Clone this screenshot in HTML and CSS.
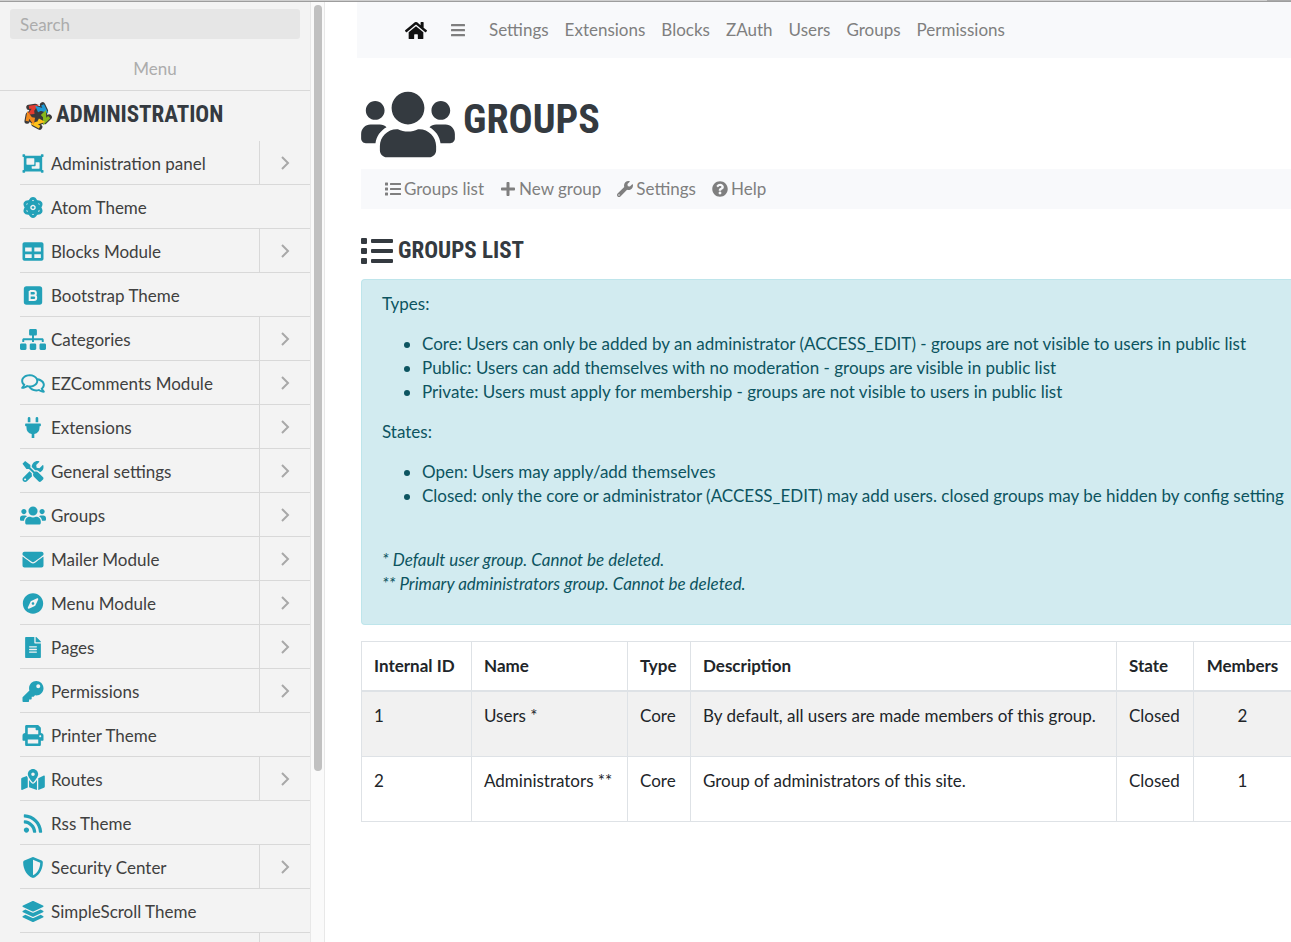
FILE: index.html
```
<!DOCTYPE html>
<html lang="en">
<head>
<meta charset="utf-8">
<title>Groups list</title>
<link rel="stylesheet" href="styles.css">
</head>
<body>
<svg class="sprite" aria-hidden="true">
<symbol id="i-users" viewBox="0 0 640 512"><path d="M96 224c35.3 0 64-28.7 64-64s-28.7-64-64-64-64 28.7-64 64 28.7 64 64 64zm448 0c35.3 0 64-28.7 64-64s-28.7-64-64-64-64 28.7-64 64 28.7 64 64 64zm32 32h-64c-17.6 0-33.5 7.1-45.1 18.6 40.3 22.1 68.9 62 75.1 109.4h66c17.7 0 32-14.3 32-32v-32c0-35.3-28.7-64-64-64zm-256 0c61.9 0 112-50.1 112-112S381.9 32 320 32 208 82.1 208 144s50.1 112 112 112zm76.8 32h-8.3c-20.8 10-43.9 16-68.5 16s-47.6-6-68.5-16h-8.3C179.6 288 128 339.6 128 403.2V432c0 26.5 21.5 48 48 48h288c26.5 0 48-21.5 48-48v-28.8c0-63.6-51.6-115.2-115.2-115.2zm-223.7-13.4C161.5 263.1 145.6 256 128 256H64c-35.3 0-64 28.7-64 64v32c0 17.7 14.3 32 32 32h65.9c6.3-47.4 34.9-87.3 75.2-109.4z"/></symbol>
<symbol id="i-home" viewBox="0 0 576 512"><path d="M280.37 148.26L96 300.11V464a16 16 0 0 0 16 16l112.06-.29a16 16 0 0 0 15.92-16V368a16 16 0 0 1 16-16h64a16 16 0 0 1 16 16v95.64a16 16 0 0 0 16 16.05L464 480a16 16 0 0 0 16-16V300L295.67 148.26a12.19 12.19 0 0 0-15.3 0zM571.6 251.47L488 182.56V44.05a12 12 0 0 0-12-12h-56a12 12 0 0 0-12 12v72.61L318.47 43a48 48 0 0 0-61 0L4.34 251.47a12 12 0 0 0-1.6 16.9l25.5 31A12 12 0 0 0 45.15 301l235.22-193.74a12.19 12.19 0 0 1 15.3 0L530.9 301a12 12 0 0 0 16.9-1.6l25.5-31a12 12 0 0 0-1.7-16.93z"/></symbol>
<symbol id="i-bars" viewBox="0 0 448 512"><rect y="60" width="448" height="72" rx="16"/><rect y="220" width="448" height="72" rx="16"/><rect y="380" width="448" height="72" rx="16"/></symbol>
<symbol id="i-list" viewBox="0 0 512 512"><path d="M80 368H16a16 16 0 0 0-16 16v64a16 16 0 0 0 16 16h64a16 16 0 0 0 16-16v-64a16 16 0 0 0-16-16zm0-320H16A16 16 0 0 0 0 64v64a16 16 0 0 0 16 16h64a16 16 0 0 0 16-16V64a16 16 0 0 0-16-16zm0 160H16a16 16 0 0 0-16 16v64a16 16 0 0 0 16 16h64a16 16 0 0 0 16-16v-64a16 16 0 0 0-16-16zm416 176H176a16 16 0 0 0-16 16v32a16 16 0 0 0 16 16h320a16 16 0 0 0 16-16v-32a16 16 0 0 0-16-16zm0-320H176a16 16 0 0 0-16 16v32a16 16 0 0 0 16 16h320a16 16 0 0 0 16-16V80a16 16 0 0 0-16-16zm0 160H176a16 16 0 0 0-16 16v32a16 16 0 0 0 16 16h320a16 16 0 0 0 16-16v-32a16 16 0 0 0-16-16z"/></symbol>
<symbol id="i-plus" viewBox="0 0 448 512"><path d="M416 208H272V64c0-17.67-14.33-32-32-32h-32c-17.67 0-32 14.33-32 32v144H32c-17.67 0-32 14.33-32 32v32c0 17.67 14.33 32 32 32h144v144c0 17.67 14.33 32 32 32h32c17.67 0 32-14.33 32-32V304h144c17.67 0 32-14.33 32-32v-32c0-17.67-14.33-32-32-32z"/></symbol>
<symbol id="i-wrench" viewBox="0 0 512 512"><path d="M507.73 109.1c-2.24-9.03-13.54-12.09-20.12-5.51l-74.36 74.36-67.88-11.31-11.31-67.88 74.36-74.36c6.62-6.62 3.43-17.9-5.66-20.16-47.38-11.74-99.55.91-136.58 37.93-39.64 39.64-50.55 97.1-34.05 147.2L18.74 402.76c-24.99 24.99-24.99 65.51 0 90.5 24.99 24.99 65.51 24.99 90.5 0l213.21-213.21c50.12 16.71 107.47 5.68 147.37-34.22 37.07-37.07 49.7-89.32 37.91-136.73zM64 472c-13.25 0-24-10.75-24-24 0-13.26 10.75-24 24-24s24 10.74 24 24c0 13.25-10.75 24-24 24z"/></symbol>
<symbol id="i-help" viewBox="0 0 512 512"><path d="M504 256c0 136.997-111.043 248-248 248S8 392.997 8 256C8 119.083 119.043 8 256 8s248 111.083 248 248zM262.655 90c-54.497 0-89.255 22.957-116.549 63.758-3.536 5.286-2.353 12.415 2.715 16.258l34.699 26.31c5.205 3.947 12.621 3.008 16.665-2.122 17.864-22.658 30.113-35.797 57.303-35.797 20.429 0 45.698 13.148 45.698 32.958 0 14.976-12.363 22.667-32.534 33.976C247.128 238.528 216 254.941 216 296v4c0 6.627 5.373 12 12 12h56c6.627 0 12-5.373 12-12v-1.333c0-28.462 83.186-29.647 83.186-106.667 0-58.002-60.165-102-116.531-102zM256 338c-25.365 0-46 20.635-46 46 0 25.364 20.635 46 46 46s46-20.636 46-46c0-25.365-20.635-46-46-46z"/></symbol>
<symbol id="i-panel" viewBox="0 0 512 512"><path d="M480 128V96h20c6.627 0 12-5.373 12-12V44c0-6.627-5.373-12-12-12h-40c-6.627 0-12 5.373-12 12v20H64V44c0-6.627-5.373-12-12-12H12C5.373 32 0 37.373 0 44v40c0 6.627 5.373 12 12 12h20v320H12c-6.627 0-12 5.373-12 12v40c0 6.627 5.373 12 12 12h40c6.627 0 12-5.373 12-12v-20h384v20c0 6.627 5.373 12 12 12h40c6.627 0 12-5.373 12-12v-40c0-6.627-5.373-12-12-12h-20V128zM96 276V140c0-6.627 5.373-12 12-12h168c6.627 0 12 5.373 12 12v136c0 6.627-5.373 12-12 12H108c-6.627 0-12-5.373-12-12zm320 96c0 6.627-5.373 12-12 12H236c-6.627 0-12-5.373-12-12v-52h72c13.255 0 24-10.745 24-24v-72h84c6.627 0 12 5.373 12 12v136z"/></symbol>
<symbol id="i-atom" viewBox="0 0 448 512"><g fill="none" stroke="currentColor" stroke-width="72"><ellipse cx="224" cy="256" rx="102" ry="218"/><ellipse cx="224" cy="256" rx="102" ry="218" transform="rotate(60 224 256)"/><ellipse cx="224" cy="256" rx="102" ry="218" transform="rotate(120 224 256)"/></g><circle cx="224" cy="256" r="32"/></symbol>
<symbol id="i-table" viewBox="0 0 512 512"><path d="M464 32H48C21.49 32 0 53.49 0 80v352c0 26.51 21.49 48 48 48h416c26.51 0 48-21.49 48-48V80c0-26.51-21.49-48-48-48zM224 416H64v-96h160v96zm0-160H64v-96h160v96zm224 160H288v-96h160v96zm0-160H288v-96h160v96z"/></symbol>
<symbol id="i-bootstrap" viewBox="0 0 448 512"><rect y="32" width="448" height="448" rx="64"/><g fill="none" stroke="#f3f3f3" stroke-width="48"><path d="M143 146v220h104a55 55 0 0 0 0-110h-104M143 146h96a55 55 0 0 1 0 110"/></g></symbol>
<symbol id="i-sitemap" viewBox="0 0 640 512"><path d="M128 352H32c-17.67 0-32 14.33-32 32v96c0 17.67 14.33 32 32 32h96c17.67 0 32-14.33 32-32v-96c0-17.67-14.33-32-32-32zm-24-80h192v48h48v-48h192v48h48v-57.59c0-21.17-17.23-38.41-38.41-38.41H344v-64h40c17.67 0 32-14.33 32-32V32c0-17.67-14.33-32-32-32H256c-17.67 0-32 14.33-32 32v96c0 17.67 14.33 32 32 32h40v64H94.41C73.23 224 56 241.23 56 262.41V320h48v-48zm264 80h-96c-17.67 0-32 14.33-32 32v96c0 17.67 14.33 32 32 32h96c17.67 0 32-14.33 32-32v-96c0-17.67-14.33-32-32-32zm240 0h-96c-17.67 0-32 14.33-32 32v96c0 17.67 14.33 32 32 32h96c17.67 0 32-14.33 32-32v-96c0-17.67-14.33-32-32-32z"/></symbol>
<symbol id="i-comments" viewBox="0 0 576 512"><path d="M532 386.2c27.5-27.1 44-61.1 44-98.2 0-80-76.5-146.1-176.2-157.9C368.3 72.5 294.3 32 208 32 93.1 32 0 103.6 0 192c0 37 16.5 71 44 98.2-15.3 30.7-37.3 54.5-37.7 54.9-6.3 6.7-8.1 16.5-4.4 25 3.6 8.5 12 14 21.2 14 53.5 0 96.7-20.2 125.2-38.8 9.2 2.1 18.7 3.7 28.4 4.9C208.1 407.6 281.8 448 368 448c20.8 0 40.8-2.4 59.8-6.8C456.3 459.7 499.4 480 553 480c9.2 0 17.5-5.5 21.2-14 3.6-8.5 1.9-18.3-4.4-25-.4-.3-22.5-24.1-37.8-54.8zm-392.8-92.3L122.1 305c-14.1 9.1-28.5 16.3-43.1 21.4 2.7-4.7 5.4-9.7 8-14.8l15.5-31.1L77.7 256C64.2 242.6 48 220.7 48 192c0-60.7 73.3-112 160-112s160 51.3 160 112-73.3 112-160 112c-16.5 0-33-1.9-49-5.6l-19.8-4.5zM498.3 352l-24.7 24.4 15.5 31.1c2.6 5.1 5.3 10.1 8 14.8-14.6-5.1-29-12.3-43.1-21.4l-17.1-11.1-19.9 4.6c-16 3.7-32.5 5.6-49 5.6-54 0-102.2-20.1-131.3-49.7C338 339.5 416 272.9 416 192c0-3.4-.4-6.7-.7-10C479.7 196.5 528 238.8 528 288c0 28.7-16.2 50.6-29.7 64z"/></symbol>
<symbol id="i-plug" viewBox="0 0 384 512"><path d="M320,32a32,32,0,0,0-64,0v96h64Zm48,128H16A16,16,0,0,0,0,176v32a16,16,0,0,0,16,16H32v32A160.07,160.07,0,0,0,160,412.8V512h64V412.8A160.07,160.07,0,0,0,352,256V224h16a16,16,0,0,0,16-16V176A16,16,0,0,0,368,160ZM128,32a32,32,0,0,0-64,0v96h64Z"/></symbol>
<symbol id="i-tools" viewBox="0 0 512 512"><path d="M501.1 395.7L384 278.6c-23.1-23.1-57.6-27.6-85.4-13.9L192 158.1V96L64 0 0 64l96 128h62.1l106.6 106.6c-13.6 27.8-9.2 62.3 13.9 85.4l117.1 117.1c14.6 14.6 38.2 14.6 52.7 0l52.7-52.7c14.5-14.6 14.5-38.2 0-52.7zM331.7 225c28.3 0 54.9 11 74.9 31l19.4 19.4c15.8-6.9 30.8-16.5 43.8-29.5 37.1-37.1 49.7-89.3 37.9-136.7-2.2-9-13.5-12.1-20.1-5.5l-74.4 74.4-67.9-11.3L334 98.9l74.4-74.4c6.6-6.6 3.4-17.9-5.7-20.2-47.4-11.7-99.6.9-136.6 37.9-28.5 28.5-41.9 66.1-41.2 103.6l82.1 82.1c8.1-1.9 16.5-2.9 24.7-2.9zm-103.9 82l-56.7-56.7L18.7 402.8c-25 25-25 65.5 0 90.5s65.5 25 90.5 0l123.6-123.6c-7.6-19.9-9.9-41.6-5-62.7zM64 472c-13.2 0-24-10.8-24-24 0-13.3 10.7-24 24-24s24 10.7 24 24c0 13.2-10.7 24-24 24z"/></symbol>
<symbol id="i-envelope" viewBox="0 0 512 512"><path d="M502.3 190.8c3.9-3.1 9.7-.2 9.7 4.7V400c0 26.5-21.5 48-48 48H48c-26.5 0-48-21.5-48-48V195.6c0-5 5.7-7.8 9.7-4.7 22.4 17.4 52.1 39.5 154.1 113.6 21.1 15.4 56.7 47.8 92.2 47.6 35.7.3 72-32.8 92.3-47.6 102-74.1 131.6-96.3 154-113.7zM256 320c23.2.4 56.6-29.2 73.4-41.4 132.7-96.3 142.8-104.7 173.4-128.7 5.8-4.5 9.2-11.5 9.2-18.9v-19c0-26.5-21.5-48-48-48H48c-26.5 0-48 21.5-48 48v19c0 7.4 3.4 14.3 9.2 18.9 30.6 23.9 40.7 32.4 173.4 128.7 16.8 12.2 50.2 41.8 73.4 41.4z"/></symbol>
<symbol id="i-compass" viewBox="0 0 496 512"><path d="M225.38 233.37c-12.5 12.5-12.5 32.76 0 45.25 12.49 12.5 32.76 12.5 45.25 0 12.5-12.5 12.5-32.76 0-45.25-12.5-12.49-32.76-12.49-45.25 0zM248 8C111.03 8 0 119.03 0 256s111.03 248 248 248 248-111.03 248-248S384.97 8 248 8zm126.14 148.05L308.17 300.4a31.938 31.938 0 0 1-15.77 15.77l-144.34 65.97c-16.65 7.61-33.81-9.55-26.2-26.2l65.98-144.35a31.938 31.938 0 0 1 15.77-15.77l144.34-65.97c16.65-7.6 33.8 9.55 26.19 26.2z"/></symbol>
<symbol id="i-file" viewBox="0 0 384 512"><path d="M224 136V0H24C10.7 0 0 10.7 0 24v464c0 13.3 10.7 24 24 24h336c13.3 0 24-10.7 24-24V160H248c-13.2 0-24-10.8-24-24zm64 236c0 6.6-5.4 12-12 12H108c-6.6 0-12-5.4-12-12v-8c0-6.6 5.4-12 12-12h168c6.6 0 12 5.4 12 12v8zm0-64c0 6.6-5.4 12-12 12H108c-6.6 0-12-5.4-12-12v-8c0-6.6 5.4-12 12-12h168c6.6 0 12 5.4 12 12v8zm0-72v8c0 6.6-5.4 12-12 12H108c-6.6 0-12-5.4-12-12v-8c0-6.6 5.4-12 12-12h168c6.6 0 12 5.4 12 12zm96-114.1v6.1H256V0h6.1c6.4 0 12.5 2.5 17 7l97.9 98c4.5 4.5 7 10.6 7 16.9z"/></symbol>
<symbol id="i-key" viewBox="0 0 512 512"><path d="M512 176.001C512 273.203 433.202 352 336 352c-11.22 0-22.19-1.062-32.827-3.069l-24.012 27.014A23.999 23.999 0 0 1 261.223 384H224v40c0 13.255-10.745 24-24 24h-40v40c0 13.255-10.745 24-24 24H24c-13.255 0-24-10.745-24-24v-78.059c0-6.365 2.529-12.47 7.029-16.971l161.802-161.802C163.108 213.814 160 195.271 160 176 160 78.798 238.797.001 335.999 0 433.488-.001 512 78.511 512 176.001zM336 128c0 26.51 21.49 48 48 48s48-21.49 48-48-21.49-48-48-48-48 21.49-48 48z"/></symbol>
<symbol id="i-print" viewBox="0 0 512 512"><path d="M448 192V77.25c0-8.49-3.37-16.62-9.37-22.63L393.37 9.37c-6-6-14.14-9.37-22.63-9.37H96C78.33 0 64 14.33 64 32v160c-35.35 0-64 28.65-64 64v112c0 8.84 7.16 16 16 16h48v96c0 17.67 14.33 32 32 32h320c17.67 0 32-14.33 32-32v-96h48c8.84 0 16-7.16 16-16V256c0-35.35-28.65-64-64-64zm-64 256H128v-96h256v96zm0-224H128V64h192v48c0 8.84 7.16 16 16 16h48v96zm48 72c-13.25 0-24-10.75-24-24 0-13.26 10.75-24 24-24s24 10.74 24 24c0 13.25-10.75 24-24 24z"/></symbol>
<symbol id="i-map" viewBox="0 0 576 512"><path d="M288 0c-69.59 0-126 56.41-126 126 0 56.26 82.35 158.8 113.9 196.02 6.39 7.54 17.82 7.54 24.2 0C331.65 284.8 414 182.26 414 126 414 56.41 357.59 0 288 0zm0 168c-23.2 0-42-18.8-42-42s18.8-42 42-42 42 18.8 42 42-18.8 42-42 42zM20.12 215.95A32.006 32.006 0 0 0 0 245.66v250.32c0 11.32 11.43 19.06 21.94 14.86L160 448V214.92c-8.84-15.98-16.07-31.54-21.25-46.42L20.12 215.95zM288 359.67c-14.07 0-27.38-6.18-36.51-16.96-19.66-23.2-40.57-49.62-59.49-76.72v182l192 64V266c-18.92 27.09-39.82 53.52-59.49 76.72-9.13 10.77-22.44 16.95-36.51 16.95zm266.06-198.51L416 224v288l139.88-55.95A31.996 31.996 0 0 0 576 426.34V176.02c0-11.32-11.43-19.06-21.94-14.86z"/></symbol>
<symbol id="i-rss" viewBox="0 0 448 512"><path d="M128.081 415.959c0 35.369-28.672 64.041-64.041 64.041S0 451.328 0 415.959s28.672-64.041 64.041-64.041 64.04 28.673 64.04 64.041zm175.66 47.25c-8.354-154.6-132.185-278.587-286.95-286.95C7.656 175.765 0 183.105 0 192.253v48.069c0 8.415 6.49 15.472 14.887 16.018 111.832 7.284 201.473 96.702 208.772 208.772.547 8.397 7.604 14.887 16.018 14.887h48.069c9.149.001 16.489-7.655 15.995-16.79zm144.249.288C439.596 229.677 251.465 40.445 16.503 32.01 7.473 31.686 0 38.981 0 48.016v48.068c0 8.625 6.835 15.645 15.453 15.999 191.179 7.839 344.627 161.316 352.465 352.465.353 8.618 7.373 15.453 15.999 15.453h48.068c9.034-.001 16.329-7.474 16.005-16.504z"/></symbol>
<symbol id="i-shield" viewBox="0 0 512 512"><path d="M466.5 83.7l-192-80a48.15 48.15 0 0 0-36.9 0l-192 80C27.7 91.1 16 108.6 16 128c0 198.5 114.5 335.7 221.5 380.3 11.8 4.9 25.1 4.9 36.9 0C360.1 472.6 496 349.3 496 128c0-19.4-11.7-36.9-29.5-44.3zM256.1 446.3l-.1-381 175.9 73.3c-3.3 151.4-82.1 261.1-175.8 307.7z"/></symbol>
<symbol id="i-layers" viewBox="0 0 512 512"><path d="M12.41 148.02l232.94 105.67c6.8 3.09 14.49 3.09 21.29 0l232.94-105.67c16.55-7.51 16.55-32.52 0-40.03L266.65 2.31a25.607 25.607 0 0 0-21.29 0L12.41 107.98c-16.55 7.51-16.55 32.53 0 40.04zm487.18 88.28l-58.09-26.33-161.64 73.27c-7.56 3.43-15.59 5.17-23.86 5.17s-16.29-1.74-23.86-5.17L70.51 209.97l-58.1 26.33c-16.55 7.5-16.55 32.5 0 40l232.94 105.59c6.8 3.08 14.49 3.08 21.29 0L499.59 276.3c16.55-7.5 16.55-32.5 0-40zm0 127.8l-57.87-26.23-161.86 73.37c-7.56 3.43-15.59 5.17-23.86 5.17s-16.29-1.74-23.86-5.17L70.29 337.87 12.41 364.1c-16.55 7.5-16.55 32.5 0 40l232.94 105.59c6.8 3.08 14.49 3.08 21.29 0L499.59 404.1c16.55-7.5 16.55-32.5 0-40z"/></symbol>
<symbol id="i-next" viewBox="0 0 10 16"><path d="M2 2l6 6-6 6" fill="none" stroke="currentColor" stroke-width="2"/></symbol>
</svg>
<div class="window-edge"><span class="window-edge-end"></span></div>
<div class="layout">
<aside class="sidebar">
<div class="panel">
<form class="search"><input class="search-input" type="text" placeholder="Search" aria-label="Search"></form>
<div class="menu-title">Menu</div>
<h2 class="brand">
<svg class="brand-logo" viewBox="-2 -2 60 60" aria-hidden="true">
<circle cx="28" cy="28" r="16" fill="#3a3a3c"/>
<g fill="none" stroke="#3a3a3c" stroke-width="12" stroke-linejoin="round" stroke-linecap="round"><path d="M9 10l14-2-10 14 8-1"/><path d="M9 10l14-2-10 14 8-1" transform="rotate(72 28 28)"/><path d="M9 10l14-2-10 14 8-1" transform="rotate(144 28 28)"/><path d="M9 10l14-2-10 14 8-1" transform="rotate(216 28 28)"/><path d="M9 10l14-2-10 14 8-1" transform="rotate(288 28 28)"/></g>
<g fill="none" stroke-width="7"><path stroke="#e23b30" d="M9 10l14-2-10 14 8-1"/><path stroke="#1d9ad6" d="M9 10l14-2-10 14 8-1" transform="rotate(72 28 28)"/><path stroke="#86b81c" d="M9 10l14-2-10 14 8-1" transform="rotate(144 28 28)"/><path stroke="#fdc21c" d="M9 10l14-2-10 14 8-1" transform="rotate(216 28 28)"/><path stroke="#f28a1c" d="M9 10l14-2-10 14 8-1" transform="rotate(288 28 28)"/></g>
</svg>
<span>ADMINISTRATION</span></h2>
<ul class="menu">
<li class="item"><a class="item-link" href="#"><svg class="icon"><use href="#i-panel"/></svg>Administration panel</a><button class="next" aria-label="Open submenu"><svg class="chevron"><use href="#i-next"/></svg></button></li>
<li class="item"><a class="item-link" href="#"><svg class="icon"><use href="#i-atom"/></svg>Atom Theme</a></li>
<li class="item"><a class="item-link" href="#"><svg class="icon"><use href="#i-table"/></svg>Blocks Module</a><button class="next" aria-label="Open submenu"><svg class="chevron"><use href="#i-next"/></svg></button></li>
<li class="item"><a class="item-link" href="#"><svg class="icon"><use href="#i-bootstrap"/></svg>Bootstrap Theme</a></li>
<li class="item"><a class="item-link" href="#"><svg class="icon"><use href="#i-sitemap"/></svg>Categories</a><button class="next" aria-label="Open submenu"><svg class="chevron"><use href="#i-next"/></svg></button></li>
<li class="item"><a class="item-link" href="#"><svg class="icon"><use href="#i-comments"/></svg>EZComments Module</a><button class="next" aria-label="Open submenu"><svg class="chevron"><use href="#i-next"/></svg></button></li>
<li class="item"><a class="item-link" href="#"><svg class="icon"><use href="#i-plug"/></svg>Extensions</a><button class="next" aria-label="Open submenu"><svg class="chevron"><use href="#i-next"/></svg></button></li>
<li class="item"><a class="item-link" href="#"><svg class="icon"><use href="#i-tools"/></svg>General settings</a><button class="next" aria-label="Open submenu"><svg class="chevron"><use href="#i-next"/></svg></button></li>
<li class="item"><a class="item-link" href="#"><svg class="icon"><use href="#i-users"/></svg>Groups</a><button class="next" aria-label="Open submenu"><svg class="chevron"><use href="#i-next"/></svg></button></li>
<li class="item"><a class="item-link" href="#"><svg class="icon"><use href="#i-envelope"/></svg>Mailer Module</a><button class="next" aria-label="Open submenu"><svg class="chevron"><use href="#i-next"/></svg></button></li>
<li class="item"><a class="item-link" href="#"><svg class="icon"><use href="#i-compass"/></svg>Menu Module</a><button class="next" aria-label="Open submenu"><svg class="chevron"><use href="#i-next"/></svg></button></li>
<li class="item"><a class="item-link" href="#"><svg class="icon"><use href="#i-file"/></svg>Pages</a><button class="next" aria-label="Open submenu"><svg class="chevron"><use href="#i-next"/></svg></button></li>
<li class="item"><a class="item-link" href="#"><svg class="icon"><use href="#i-key"/></svg>Permissions</a><button class="next" aria-label="Open submenu"><svg class="chevron"><use href="#i-next"/></svg></button></li>
<li class="item"><a class="item-link" href="#"><svg class="icon"><use href="#i-print"/></svg>Printer Theme</a></li>
<li class="item"><a class="item-link" href="#"><svg class="icon"><use href="#i-map"/></svg>Routes</a><button class="next" aria-label="Open submenu"><svg class="chevron"><use href="#i-next"/></svg></button></li>
<li class="item"><a class="item-link" href="#"><svg class="icon"><use href="#i-rss"/></svg>Rss Theme</a></li>
<li class="item"><a class="item-link" href="#"><svg class="icon"><use href="#i-shield"/></svg>Security Center</a><button class="next" aria-label="Open submenu"><svg class="chevron"><use href="#i-next"/></svg></button></li>
<li class="item"><a class="item-link" href="#"><svg class="icon"><use href="#i-layers"/></svg>SimpleScroll Theme</a></li>
<li class="item"><span class="item-link"></span><span class="next"></span></li>
</ul>
</div>
<div class="scrollbar"><div class="thumb"></div></div>
</aside>
<main class="main">
<nav class="topnav" aria-label="Main">
<a class="home" href="#" aria-label="Home"><svg class="home-icon"><use href="#i-home"/></svg></a>
<a class="toggle" href="#" aria-label="Toggle menu"><svg class="nav-icon"><use href="#i-bars"/></svg></a>
<a href="#">Settings</a><a href="#">Extensions</a><a href="#">Blocks</a><a href="#">ZAuth</a><a href="#">Users</a><a href="#">Groups</a><a href="#">Permissions</a>
</nav>
<div class="content">
<h1 class="title"><svg class="title-icon"><use href="#i-users"/></svg><span class="title-text">GROUPS</span></h1>
<nav class="subnav" aria-label="Groups">
<a href="#"><svg class="nav-icon"><use href="#i-list"/></svg>Groups list</a>
<a href="#"><svg class="nav-icon"><use href="#i-plus"/></svg>New group</a>
<a href="#"><svg class="nav-icon"><use href="#i-wrench"/></svg>Settings</a>
<a href="#"><svg class="nav-icon"><use href="#i-help"/></svg>Help</a>
</nav>
<h2 class="subtitle"><svg class="subtitle-icon"><use href="#i-list"/></svg>GROUPS LIST</h2>
<section class="notice">
<p>Types:</p>
<ul>
<li>Core: Users can only be added by an administrator (ACCESS_EDIT) - groups are not visible to users in public list</li>
<li>Public: Users can add themselves with no moderation - groups are visible in public list</li>
<li>Private: Users must apply for membership - groups are not visible to users in public list</li>
</ul>
<p>States:</p>
<ul>
<li>Open: Users may apply/add themselves</li>
<li>Closed: only the core or administrator (ACCESS_EDIT) may add users. closed groups may be hidden by config setting</li>
</ul>
<p class="footnote"><em>* Default user group. Cannot be deleted.<br>** Primary administrators group. Cannot be deleted.</em></p>
</section>
<table class="groups">
<colgroup><col class="c-id"><col class="c-name"><col class="c-type"><col><col class="c-state"><col class="c-members"></colgroup>
<thead><tr><th>Internal ID</th><th>Name</th><th>Type</th><th>Description</th><th>State</th><th class="num">Members</th></tr></thead>
<tbody>
<tr><td>1</td><td>Users *</td><td>Core</td><td>By default, all users are made members of this group.</td><td>Closed</td><td class="num">2</td></tr>
<tr><td>2</td><td>Administrators **</td><td>Core</td><td>Group of administrators of this site.</td><td>Closed</td><td class="num">1</td></tr>
</tbody>
</table>
</div>
</main>
</div>
</body>
</html>
```
FILE: styles.css
```
* { box-sizing: border-box; }
body { margin: 0; height: 100vh; overflow: hidden; display: flex; flex-direction: column; background: #fff; color: #212529; font: 17px/24px Lato, "Open Sans", sans-serif; }
svg { fill: currentColor; flex: none; }
a { color: inherit; text-decoration: none; }
h1, h2, p, ul { margin: 0; padding: 0; }
.sprite { position: absolute; width: 0; height: 0; }

.window-edge { display: flex; justify-content: flex-end; flex: none; height: 2px; background: #cfcfcf; border-bottom: 1px solid #9d9d9d; }
.window-edge-end { width: 24px; background: #aaa; }
.layout { display: flex; flex: 1; min-height: 0; }

.sidebar { display: flex; flex: none; width: 325px; border-right: 1px solid #e8e8e8; }
.panel { flex: 1; overflow: hidden; background: #f3f3f3; color: #404040; }
.search { padding: 7px 10px 0; }
.search-input { display: block; width: 100%; height: 30px; padding: 0 10px; border: 0; border-radius: 3px; background: #e6e6e6; font: inherit; color: #404040; }
.search-input::placeholder { color: #acacac; opacity: 1; }
.menu-title { height: 52px; padding-top: 18px; border-bottom: 1px solid #d8d8d8; text-align: center; color: #acacac; }
.brand { display: flex; align-items: center; gap: 5px; height: 50px; padding: 0 0 2px 24px; color: #343a40; font: bold 23px/28px "Roboto Condensed", "Open Sans Condensed", sans-serif; }
.brand-logo { width: 27px; height: 27px; overflow: visible; }
.menu { list-style: none; padding-left: 20px; }
.item { display: flex; height: 44px; border-bottom: 1px solid #d8d8d8; }
.item-link { display: flex; flex: 1; align-items: center; gap: 5px; padding-top: 2px; }
.icon { width: 26px; height: 21px; color: #23a1b8; }
.next { display: flex; align-items: center; justify-content: center; width: 51px; padding: 0; border: 0; border-left: 1px solid #d8d8d8; background: none; color: #a8a8a8; }
.chevron { width: 10px; height: 16px; }
.scrollbar { width: 14px; padding: 3px 2px; border-left: 1px solid #e8e8e8; background: #fafafa; }
.thumb { width: 8px; height: 82%; margin: 0 auto; border-radius: 4px; background: #c1c1c1; }

.main { flex: 1; min-width: 0; overflow: hidden; padding-left: 32px; }
.topnav, .subnav { display: flex; align-items: center; gap: 16px; background: #f8f9fb; color: #7f7f7f; white-space: nowrap; }
.topnav { height: 56px; padding-left: 48px; }
.home { display: flex; color: #111; }
.home-icon { width: 22px; height: 21px; }
.toggle { display: flex; padding: 0 7px; }
.nav-icon { width: 16px; height: 16px; }
.content { padding-left: 4px; }
.title, .subtitle { display: flex; align-items: center; color: #343a40; font-family: "Roboto Condensed", "Open Sans Condensed", sans-serif; font-weight: bold; }
.title { gap: 8px; height: 111px; padding-top: 22px; font-size: 40px; line-height: 48px; }
.title-icon { width: 94px; height: 75px; }
.title-text { padding-bottom: 10px; }
.subnav { height: 40px; padding-left: 24px; }
.subnav a { display: flex; align-items: center; gap: 3px; }
.subtitle { gap: 5px; height: 70px; padding-top: 14px; font-size: 23px; line-height: 32px; }
.subtitle-icon { width: 32px; height: 32px; }
.notice { margin-bottom: 16px; padding: 12px 0 12px 20px; border: 1px solid #bee5eb; border-right: 0; border-radius: 4px 0 0 4px; background: #d2ebf0; color: #0c5460; white-space: nowrap; }
.notice p, .notice ul { margin-bottom: 16px; }
.notice ul { padding-left: 40px; }
.notice .footnote { padding-top: 24px; }
.groups { width: calc(100% + 1px); border-collapse: collapse; }
.groups th, .groups td { padding: 12px; border: 1px solid #dee2e6; text-align: left; vertical-align: top; white-space: nowrap; }
.groups thead th { border-bottom-width: 2px; }
.groups tbody td { height: 65px; }
.groups tbody tr:nth-child(odd) { background: #f1f1f1; }
.groups .num { text-align: center; }
.c-id { width: 110px; }
.c-name { width: 156px; }
.c-type { width: 63px; }
.c-state { width: 77px; }
.c-members { width: 98px; }
```
